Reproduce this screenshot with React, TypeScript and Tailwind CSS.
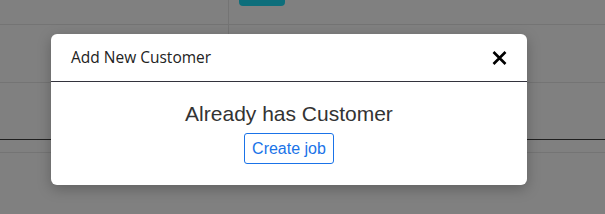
import React from "react";

export default function App() {
  return (
    <div className="relative h-[214px] w-[605px] overflow-hidden bg-[#808080] font-['Liberation_Sans',Arial,sans-serif]">
      {/* background page (dimmed) */}
      <div className="flex h-[25px] border-b border-[#747474]">
        <div className="w-[229px] border-r border-[#747474]" />
        <div className="flex-1 pl-[10px]">
          <div className="-mt-[10px] h-[16px] w-[46px] rounded-[4px] bg-[#0d6e7b]" />
        </div>
      </div>
      <div className="flex h-[58px] border-b border-[#747474]">
        <div className="w-[229px] border-r border-[#747474]" />
        <div className="flex-1" />
      </div>
      <div className="h-[57px] border-b border-[#1f1f1f]" />
      <div className="h-[13px] border-b border-[#747474]" />

      {/* modal */}
      <div className="absolute left-[51px] top-[34px] w-[476px] rounded-[6px] bg-white shadow-[0_4px_14px_rgba(0,0,0,0.25)]">
        <div className="flex h-[48px] items-center justify-between border-b border-[#33333d] pl-[20px] pr-[20px]">
          <span className="font-['Open_Sans',sans-serif] text-[15.5px] text-[#222]">
            Add New Customer
          </span>
          <svg width="15" height="14" viewBox="0 0 15 14" className="mt-[1px]">
            <path d="M1.5 1 L13.5 13 M13.5 1 L1.5 13" stroke="#000" strokeWidth="2.6" strokeLinecap="butt" />
          </svg>
        </div>
        <div className="flex flex-col items-center pt-[20px] pb-[21px]">
          <div className="text-[21px] leading-[24px] text-[#333]">Already has Customer</div>
          <button className="mt-[7px] h-[31px] rounded-[3px] border border-[#1a73e8] px-[7px] text-[16px] text-[#1a73e8]">
            Create job
          </button>
        </div>
      </div>
    </div>
  );
}
